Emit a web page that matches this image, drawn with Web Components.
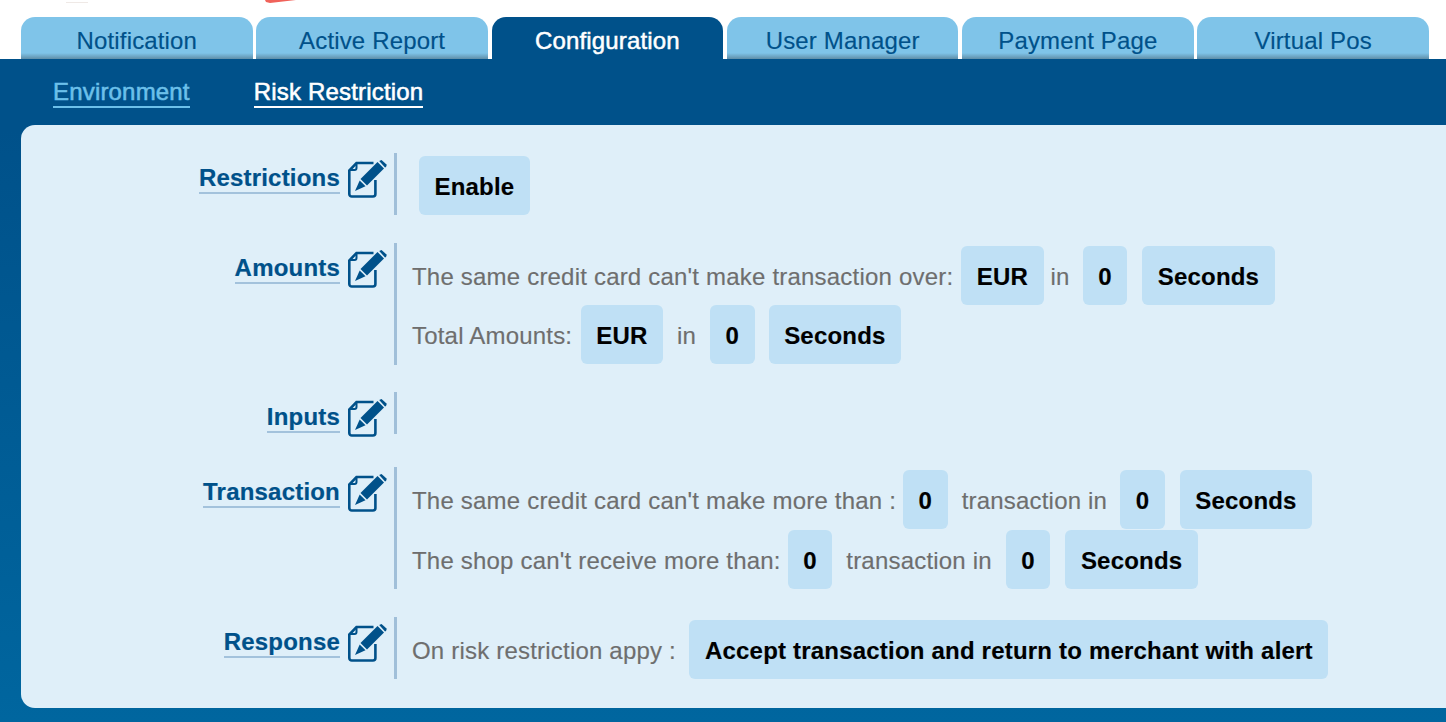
<!DOCTYPE html>
<html lang="en">
<head>
<meta charset="utf-8">
<title>Risk Restriction</title>
<style>
html, body { margin: 0; height: 722px; overflow: hidden; background: #fff; }
body { font: 24px "Liberation Sans", Arial, sans-serif; }
</style>
</head>
<body>
<config-page>
  <tab-item>Notification</tab-item>
  <tab-item>Active Report</tab-item>
  <tab-item active>Configuration</tab-item>
  <tab-item>User Manager</tab-item>
  <tab-item>Payment Page</tab-item>
  <tab-item>Virtual Pos</tab-item>

  <sub-link slot="sub" selected>Environment</sub-link>
  <sub-link slot="sub" current>Risk Restriction</sub-link>

  <risk-row slot="rows" label="Restrictions">
    <risk-line><risk-pill style="margin-left:7px">Enable</risk-pill></risk-line>
  </risk-row>

  <risk-row slot="rows" label="Amounts" style="margin-top:28px">
    <risk-line>
      <span style="margin-right:8px">The same credit card can't make transaction over:</span>
      <risk-pill>EUR</risk-pill>
      <span style="margin:0 13px 0 7px">in</span>
      <risk-pill>0</risk-pill>
      <risk-pill style="margin-left:15px">Seconds</risk-pill>
    </risk-line>
    <risk-line style="margin-bottom:1px">
      <span style="margin-right:8.5px">Total Amounts:</span>
      <risk-pill>EUR</risk-pill>
      <span style="margin:0 14px">in</span>
      <risk-pill>0</risk-pill>
      <risk-pill style="margin-left:14px">Seconds</risk-pill>
    </risk-line>
  </risk-row>

  <risk-row slot="rows" label="Inputs" empty style="margin-top:27px"></risk-row>

  <risk-row slot="rows" label="Transaction" style="margin-top:33px">
    <risk-line>
      <span style="margin-right:7px">The same credit card can't make more than :</span>
      <risk-pill>0</risk-pill>
      <span style="margin:0 13px 0 14px">transaction in</span>
      <risk-pill>0</risk-pill>
      <risk-pill style="margin-left:15px">Seconds</risk-pill>
    </risk-line>
    <risk-line style="margin-top:1px">
      <span style="margin-right:7px">The shop can't receive more than:</span>
      <risk-pill>0</risk-pill>
      <span style="margin:0 14px">transaction in</span>
      <risk-pill>0</risk-pill>
      <risk-pill style="margin-left:15px">Seconds</risk-pill>
    </risk-line>
  </risk-row>

  <risk-row slot="rows" label="Response" style="margin-top:28px">
    <risk-line>
      <span style="margin-right:13.5px">On risk restriction appy :</span>
      <risk-pill>Accept transaction and return to merchant with alert</risk-pill>
    </risk-line>
  </risk-row>
</config-page>

<script>
"use strict";

const EDIT_ICON = `
<svg width="40" height="40" viewBox="0 0 40 40" aria-hidden="true">
  <path d="M28.400 20V34a2.500 2.500 0 0 1-2.500 2.500H4.800a2.500 2.500 0 0 1-2.500-2.500V10.500L9.500 3H26.500" fill="none" stroke="#00518a" stroke-width="2.600"/>
  <path d="M9.500 3V8a2 2 0 0 1-2 2H2.300" fill="none" stroke="#00518a" stroke-width="2"/>
  <path d="M13.500 19 L30.500 2 L37 8.500 L20 25.500Z" fill="#00518a"/>
  <path d="M32.200 1 L34.500 0 L39.800 4.800 L39 7 L38 7.500Z" fill="#00518a"/>
  <path d="M12.700 20.500 L18.500 26.300 L8 31Z" fill="#00518a"/>
</svg>`;

class ConfigPage extends HTMLElement {
  constructor() {
    super();
    this.attachShadow({ mode: 'open' });
    this.shadowRoot.innerHTML = `
<style>
:host {
  display: block;
  position: relative;
  height: 722px;
  overflow: hidden;
}
#mark {
  position: absolute;
  left: 264px;
  top: 0;
}
#smudge {
  position: absolute;
  left: 66px;
  top: 2px;
  width: 22px;
  height: 1px;
  background: #efe9e6;
}
#tabs {
  display: flex;
  gap: 3.600px;
  padding: 17px 17px 0 21px;
}
#main {
  height: 663px;
  box-sizing: border-box;
  background: linear-gradient(#00518a, #00518a 70px, #00669f);
  padding-bottom: 14px;
  display: flex;
  flex-direction: column;
}
#sub {
  display: flex;
  gap: 64px;
  height: 66px;
  box-sizing: border-box;
  padding: 19px 0 0 53px;
}
#panel {
  flex: 1;
  margin-left: 21px;
  padding-top: 28px;
  background: #dfeff9;
  border-radius: 14px 0 0 14px;
}
</style>
<svg id="mark" width="32" height="4" viewBox="0 0 32 4" aria-hidden="true"><path d="M1 0H32L6 3 2 2Z" fill="#f0625a"/></svg>
<div id="smudge"></div>
<div id="tabs"><slot></slot></div>
<div id="main">
  <div id="sub"><slot name="sub"></slot></div>
  <div id="panel"><slot name="rows"></slot></div>
</div>
`;
  }
}
customElements.define('config-page', ConfigPage);

class TabItem extends HTMLElement {
  constructor() {
    super();
    this.attachShadow({ mode: 'open' });
    this.shadowRoot.innerHTML = `
<style>
:host {
  display: block;
  flex: 1;
  height: 42px;
  box-sizing: border-box;
  padding-top: 10px;
  line-height: 28px;
  text-align: center;
  letter-spacing: 0.150px;
  border-radius: 14px 14px 0 0;
  color: #00518a;
  background: linear-gradient(#7fc4e9, #7fc4e9 36px, #5f8ea8);
  -webkit-text-stroke: 0.150px currentColor;
}
:host([active]) {
  color: #fff;
  background: #00518a;
  -webkit-text-stroke: 0.500px #fff;
}
</style>
<slot></slot>
`;
  }
}
customElements.define('tab-item', TabItem);

class SubLink extends HTMLElement {
  constructor() {
    super();
    this.attachShadow({ mode: 'open' });
    this.shadowRoot.innerHTML = `
<style>
:host {
  display: block;
  height: 28px;
  line-height: 28px;
  border-bottom: 2px solid currentColor;
  letter-spacing: 0.180px;
  color: #6cc0ea;
  -webkit-text-stroke: 0.550px currentColor;
}
:host([current]) { color: #fff; }
</style>
<slot></slot>
`;
  }
}
customElements.define('sub-link', SubLink);

class RiskRow extends HTMLElement {
  constructor() {
    super();
    this.attachShadow({ mode: 'open' });
    this.shadowRoot.innerHTML = `
<style>
:host {
  display: flex;
  align-items: flex-start;
}
#head {
  flex: none;
  width: 373px;
  height: 42px;
  display: flex;
  justify-content: flex-end;
  padding-top: 7px;
  box-sizing: border-box;
  padding-right: 7px;
}
#label {
  margin: 4px 7px 0 0;
  height: 28px;
  line-height: 28px;
  border-bottom: 2px solid #a3c2dc;
  font-weight: bold;
  letter-spacing: 0.200px;
  color: #00518a;
  -webkit-text-stroke: 0.200px currentColor;
}
svg { flex: none; }
#body {
  border-left: 3px solid #a0bfd9;
  min-height: 42px;
  padding: 3px 0 0 15px;
  box-sizing: border-box;
  color: #6e6e6e;
}
</style>
<div id="head"><span id="label"></span>${EDIT_ICON}</div>
<div id="body"><slot></slot></div>
`;
  }

  connectedCallback() {
    this.shadowRoot.getElementById("label").textContent = this.getAttribute("label");
  }
}
customElements.define('risk-row', RiskRow);

class RiskLine extends HTMLElement {
  constructor() {
    super();
    this.attachShadow({ mode: 'open' });
    this.shadowRoot.innerHTML = `
<style>
:host {
  display: flex;
  align-items: center;
  height: 59px;
  white-space: nowrap;
  letter-spacing: 0.200px;
  -webkit-text-stroke: 0.150px currentColor;
}
::slotted(span) { padding-top: 2px; }
</style>
<slot></slot>
`;
  }
}
customElements.define('risk-line', RiskLine);

class RiskPill extends HTMLElement {
  constructor() {
    super();
    this.attachShadow({ mode: 'open' });
    this.shadowRoot.innerHTML = `
<style>
:host {
  display: block;
  height: 59px;
  line-height: 61px;
  padding: 0 15.500px;
  border-radius: 6px;
  background: #bfe0f5;
  color: #000;
  font-weight: bold;
  letter-spacing: 0.200px;
}
</style>
<slot></slot>
`;
  }
}
customElements.define('risk-pill', RiskPill);
</script>
</body>
</html>
